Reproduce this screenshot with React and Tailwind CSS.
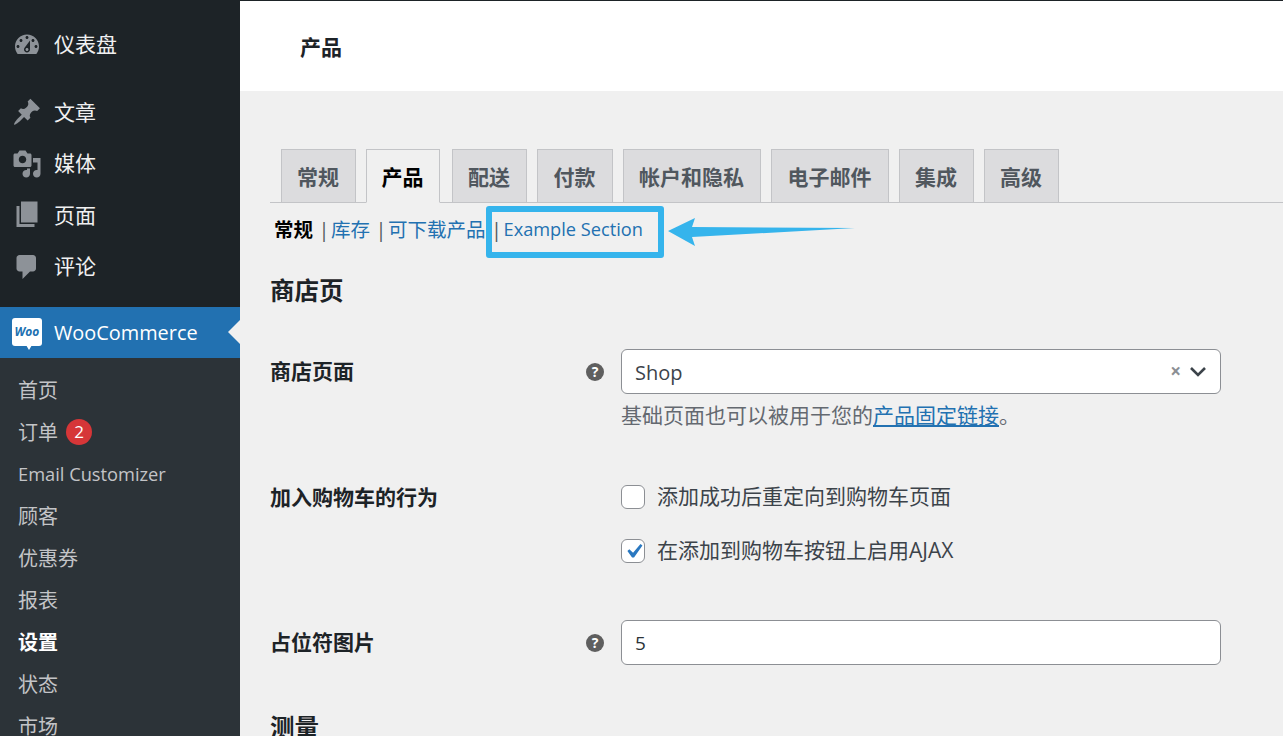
import React from 'react';

const font = { fontFamily: '"Open Sans", "Noto Sans CJK SC", sans-serif' };

// dashicons style menu glyphs
const icons = {
  dashboard: 'M3.76 16h12.48c1.1-1.37 1.76-3.11 1.76-5 0-4.42-3.58-8-8-8s-8 3.58-8 8c0 1.89.66 3.63 1.76 5zM10 4c.55 0 1 .45 1 1s-.45 1-1 1-1-.45-1-1 .45-1 1-1zM6 6c.55 0 1 .45 1 1s-.45 1-1 1-1-.45-1-1 .45-1 1-1zm8 0c.55 0 1 .45 1 1s-.45 1-1 1-1-.45-1-1 .45-1 1-1zm-5.37 5.55L12 7v6c0 1.1-.9 2-2 2s-2-.9-2-2c0-.57.24-1.08.63-1.45zM4 10c.55 0 1 .45 1 1s-.45 1-1 1-1-.45-1-1 .45-1 1-1zm12 0c.55 0 1 .45 1 1s-.45 1-1 1-1-.45-1-1 .45-1 1-1zm-5 3c0-.55-.45-1-1-1s-1 .45-1 1 .45 1 1 1 1-.45 1-1z',
  pin: 'M10.44 3.02l1.82-1.82 6.36 6.35-1.83 1.82c-1.05-.68-2.48-.57-3.41.36l-.75.75c-.92.93-1.04 2.35-.35 3.41l-1.83 1.82-2.41-2.41-2.8 2.79c-.42.42-3.38 2.71-3.8 2.29s1.86-3.39 2.28-3.81l2.79-2.79L4.1 9.36l1.83-1.82c1.05.69 2.48.57 3.4-.36l.75-.75c.93-.92 1.05-2.35.36-3.41z',
  media: 'M13 11V4c0-.55-.45-1-1-1h-1.67L9 1H5L3.67 3H2c-.55 0-1 .45-1 1v7c0 .55.45 1 1 1h10c.55 0 1-.45 1-1zM7 4.5c1.38 0 2.5 1.12 2.5 2.5S8.38 9.5 7 9.5 4.5 8.38 4.5 7 5.62 4.5 7 4.5zM14 6h5v10.5c0 1.38-1.12 2.5-2.5 2.5S14 17.88 14 16.5s1.12-2.5 2.5-2.5c.17 0 .34.02.5.05V9h-3V6zm-4 8.05V13h2v3.5c0 1.38-1.12 2.5-2.5 2.5S7 17.88 7 16.5 8.12 14 9.5 14c.17 0 .34.02.5.05z',
  page: 'M6 1h11v14H6zM3 4h2v12h10v2H3z',
  comment: 'M5 2h9c1.1 0 2 .9 2 2v7c0 1.1-.9 2-2 2h-2l-5 5v-5H5c-1.1 0-2-.9-2-2V4c0-1.1.9-2 2-2z',
};

const MenuItem = ({ icon, label }) => (
  <div className="flex items-center h-[51.5px] shrink-0 pl-3">
    <svg viewBox="0 0 20 20" className="w-[30px] h-[30px] fill-[#8d9298]">
      <path d={icons[icon]} />
    </svg>
    <span className="ml-3 text-[21px] text-[#f0f0f1]">{label}</span>
  </div>
);

const SubItem = ({ label, bold, children }) => (
  <div className={`flex items-center h-[42px] shrink-0 pl-[18px] text-[20px] ${bold ? 'font-bold text-white' : 'text-[#c3c4c7]'}`}>
    <span className={label === 'Email Customizer' ? 'text-[18.25px]' : 'pt-px'}>{label}</span>
    {children}
  </div>
);

const Sidebar = () => (
  <aside className="w-[240px] shrink-0 bg-[#1d2327] flex flex-col">
    <div className="pt-[19px] pb-[16px] shrink-0">
      <MenuItem icon="dashboard" label="仪表盘" />
    </div>
    <MenuItem icon="pin" label="文章" />
    <MenuItem icon="media" label="媒体" />
    <MenuItem icon="page" label="页面" />
    <MenuItem icon="comment" label="评论" />
    <div className="h-[14.5px] shrink-0" />
    <div className="relative flex items-center h-[51px] pl-3 bg-[#2271b1] shrink-0">
      <div className="relative w-[30px] h-[28px] bg-white rounded-[3px] flex items-center justify-center mb-[2px]">
        <span className="text-[#2271b1] text-[12px] font-bold italic leading-none">Woo</span>
        <div className="absolute left-[14px] top-[27px] w-0 h-0 border-t-[5px] border-t-white border-l-[3px] border-l-transparent border-r-[3px] border-r-transparent" />
      </div>
      <span className="ml-3 text-[19.9px] text-white">WooCommerce</span>
      <div className="absolute right-0 top-[13px] w-0 h-0 border-y-[12px] border-y-transparent border-r-[12px] border-r-[#f0f0f0]" />
    </div>
    <div className="flex-1 bg-[#2c3338] pt-[11px] flex flex-col">
      <SubItem label="首页" />
      <SubItem label="订单">
        <span className="ml-2 w-[26px] h-[26px] rounded-full bg-[#d63638] text-white text-[17px] flex items-center justify-center">2</span>
      </SubItem>
      <SubItem label="Email Customizer" />
      <SubItem label="顾客" />
      <SubItem label="优惠券" />
      <SubItem label="报表" />
      <SubItem label="设置" bold />
      <SubItem label="状态" />
      <SubItem label="市场" />
    </div>
  </aside>
);

const tabs = [
  { label: '常规', w: 'w-[75px]' },
  { label: '产品', w: 'w-[74px]', active: true },
  { label: '配送', w: 'w-[75px] ml-[2px]' },
  { label: '付款', w: 'w-[76px]' },
  { label: '帐户和隐私', w: 'w-[138px]' },
  { label: '电子邮件', w: 'w-[118px]' },
  { label: '集成', w: 'w-[75px]' },
  { label: '高级', w: 'w-[75px]' },
];

const Help = () => (
  <span className="w-[18px] h-[18px] rounded-full bg-[#5f5f5f] text-white text-[14px] font-bold flex items-center justify-center leading-none">?</span>
);

const Checkbox = ({ checked, label }) => (
  <label className="flex items-center h-[24px]">
    <span className="w-[24px] h-[24px] bg-white border border-[#8c8f94] rounded-[6px] flex items-center justify-center">
      {checked && (
        <svg viewBox="0 0 20 20" className="w-[29px] h-[29px] shrink-0 overflow-visible fill-[#2a78c0]">
          <path d="M14.83 4.89l1.34.94-5.81 8.38H9.02L5.78 9.67l1.34-1.25 2.57 2.4z" />
        </svg>
      )}
    </span>
    <span className="ml-3 text-[21px] text-[#3c434a]">{label}</span>
  </label>
);

const Sep = () => <span className="ml-[5.5px] mr-[1.5px] text-[#50575e] text-[20px]">|</span>;

const Settings = () => (
  <main className="flex-1 min-w-0 bg-[#f0f0f0] flex flex-col">
    <header className="h-[91px] shrink-0 bg-white border-t border-[#1d2327] flex items-center pl-[60px] pt-1">
      <h1 className="text-[21px] font-bold text-[#1d2327]">产品</h1>
    </header>
    <div className="relative pl-[30px] flex-1">
      {/* tabs */}
      <div className="mt-[58px] h-[54px] border-b border-[#c3c4c7] pl-[11px] flex gap-[10px] items-end">
        {tabs.map(t => (
          <div
            key={t.label}
            className={`${t.w} h-[53px] pt-[3px] pr-px border border-[#c3c4c7] flex items-center justify-center text-[21px] font-bold ${t.active ? 'h-[54px] bg-[#f0f0f0] border-b-[#f0f0f0] text-black relative top-px' : 'border-b-0 bg-[#dcdcde] text-[#50575e]'}`}
          >
            {t.label}
          </div>
        ))}
      </div>

      {/* sections */}
      <div className="flex items-center h-[54px] pl-[4px] text-[19.5px] text-[#2271b1]">
        <span className="font-bold text-black">常规</span>
        <Sep />
        <span>库存</span>
        <Sep />
        <span>可下载产品</span>
        <Sep />
        <span className="text-[18.2px]">Example Section</span>
      </div>

      {/* annotation over the section links */}
      <div className="absolute left-[246px] top-[115px] w-[178px] h-[52px] border-[6px] border-[#35b4ec] rounded-[3px]" />
      <svg className="absolute left-[426px] top-[125px]" width="192" height="32" viewBox="0 0 192 32">
        <path d="M2 15 L29 2 L26 11 L189 12 L26 21 L29 30 Z" fill="#35b4ec" />
      </svg>

      <h2 className="text-[24.5px] font-bold text-[#1d2327] mt-[16px] leading-[36px]">商店页</h2>

      <div className="grid grid-cols-[316px_35px_600px] mt-[40px]">
        <div className="text-[21px] font-bold text-[#1d2327] h-[45px] flex items-center">商店页面</div>
        <div className="h-[45px] flex items-center"><Help /></div>
        <div>
          <div className="h-[45px] bg-white border border-[#8c8f94] rounded-[6px] flex items-center pl-[13px] pr-[14px] text-[20px] text-[#3c434a]">
            <span className="flex-1 pt-[3px]">Shop</span>
            <span className="text-[#8c8f94] text-[19px] font-bold mr-[9px]">×</span>
            <svg width="16" height="10" viewBox="0 0 16 10" fill="none" stroke="#3c434a" strokeWidth="2.6">
              <path d="M1 1l7 7 7-7" />
            </svg>
          </div>
          <p className="mt-[5px] text-[21px] leading-[32px] text-[#646970]">
            基础页面也可以被用于您的<a className="text-[#2271b1] underline">产品固定链接</a>。
          </p>
        </div>

        <div className="text-[21px] font-bold text-[#1d2327] mt-[50px] leading-[32px] h-[32px]">加入购物车的行为</div>
        <div />
        <div className="mt-[54px] flex flex-col gap-[30px]">
          <Checkbox label="添加成功后重定向到购物车页面" />
          <Checkbox checked label="在添加到购物车按钮上启用AJAX" />
        </div>

        <div className="text-[21px] font-bold text-[#1d2327] mt-[57px] h-[45px] flex items-center">占位符图片</div>
        <div className="mt-[57px] h-[45px] flex items-center"><Help /></div>
        <div className="mt-[57px] h-[45px] bg-white border border-[#8c8f94] rounded-[6px] flex items-center pl-[13px] pt-px text-[19px] text-[#2c3338]">5</div>
      </div>

      <h2 className="text-[24.5px] font-bold text-[#1d2327] mt-[45px] leading-[36px]">测量</h2>
    </div>
  </main>
);

export default function App() {
  return (
    <div className="flex h-[736px] overflow-hidden" style={font}>
      <Sidebar />
      <Settings />
    </div>
  );
}
